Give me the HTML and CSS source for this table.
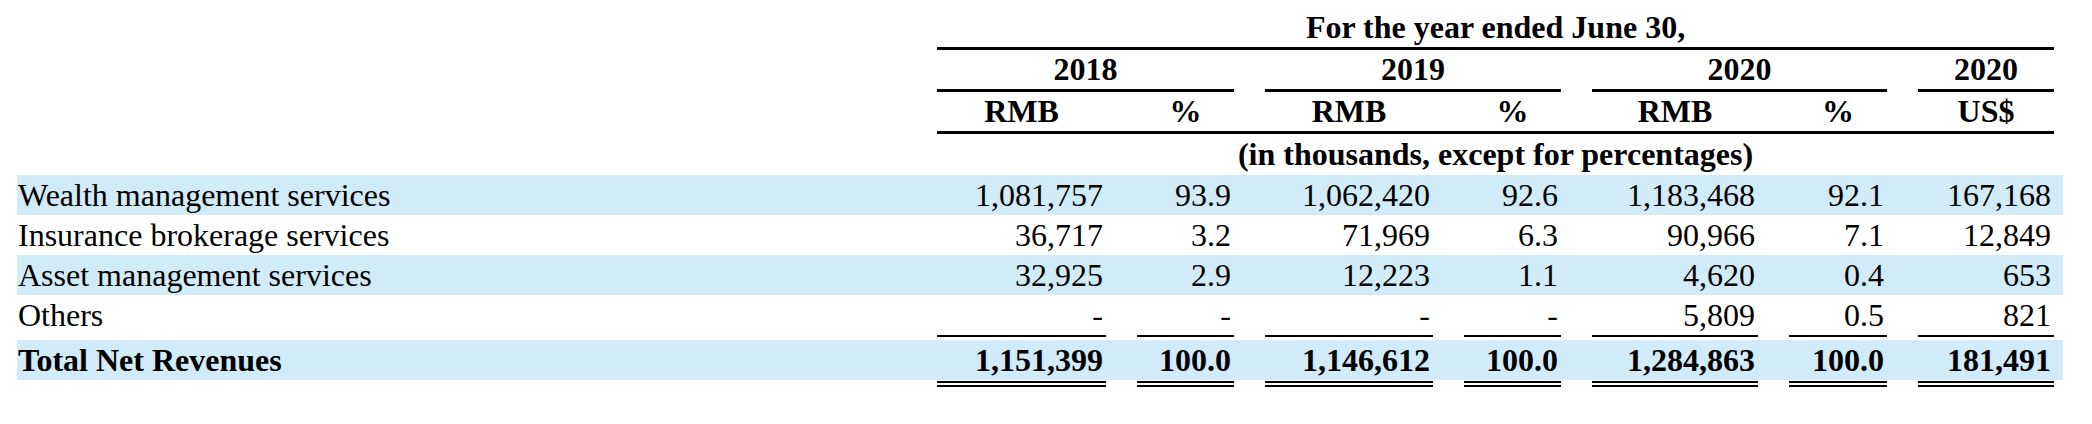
FILE: index.html
```html
<!DOCTYPE html>
<html lang="en">
<head>
<meta charset="utf-8">
<title>Net revenues by service line</title>
<link rel="stylesheet" href="styles.css">
</head>
<body>
<div class="fin-table">
  <div class="grid head-title">
    <div class="title">For the year ended June 30,</div>
  </div>
  <div class="grid head-years">
    <div class="year span-2018">2018</div>
    <div class="year span-2019">2019</div>
    <div class="year span-2020">2020</div>
    <div class="year span-usd">2020</div>
  </div>
  <div class="grid head-units">
    <div class="unit c1">RMB</div>
    <div class="unit c2">%</div>
    <div class="unit c3">RMB</div>
    <div class="unit c4">%</div>
    <div class="unit c5">RMB</div>
    <div class="unit c6">%</div>
    <div class="unit c7">US$</div>
    <div class="rule-full"></div>
  </div>
  <div class="grid head-note">
    <div class="note">(in thousands, except for percentages)</div>
  </div>

  <div class="grid data-row shaded">
    <div class="label">Wealth management services</div>
    <div class="num">1,081,757</div>
    <div class="num">93.9</div>
    <div class="num">1,062,420</div>
    <div class="num">92.6</div>
    <div class="num">1,183,468</div>
    <div class="num">92.1</div>
    <div class="num">167,168</div>
  </div>
  <div class="grid data-row">
    <div class="label">Insurance brokerage services</div>
    <div class="num">36,717</div>
    <div class="num">3.2</div>
    <div class="num">71,969</div>
    <div class="num">6.3</div>
    <div class="num">90,966</div>
    <div class="num">7.1</div>
    <div class="num">12,849</div>
  </div>
  <div class="grid data-row shaded">
    <div class="label">Asset management services</div>
    <div class="num">32,925</div>
    <div class="num">2.9</div>
    <div class="num">12,223</div>
    <div class="num">1.1</div>
    <div class="num">4,620</div>
    <div class="num">0.4</div>
    <div class="num">653</div>
  </div>
  <div class="grid data-row">
    <div class="label">Others</div>
    <div class="num">-</div>
    <div class="num">-</div>
    <div class="num">-</div>
    <div class="num">-</div>
    <div class="num">5,809</div>
    <div class="num">0.5</div>
    <div class="num">821</div>
  </div>
  <div class="grid rule-row single">
    <span class="c1"></span><span class="c2"></span><span class="c3"></span><span class="c4"></span><span class="c5"></span><span class="c6"></span><span class="c7"></span>
  </div>
  <div class="grid data-row shaded total">
    <div class="label">Total Net Revenues</div>
    <div class="num">1,151,399</div>
    <div class="num">100.0</div>
    <div class="num">1,146,612</div>
    <div class="num">100.0</div>
    <div class="num">1,284,863</div>
    <div class="num">100.0</div>
    <div class="num">181,491</div>
  </div>
  <div class="grid rule-row double">
    <span class="c1"></span><span class="c2"></span><span class="c3"></span><span class="c4"></span><span class="c5"></span><span class="c6"></span><span class="c7"></span>
  </div>
</div>
</body>
</html>
```

FILE: styles.css
```css
html, body {
  margin: 0;
  padding: 0;
  background: #ffffff;
}

body {
  font-family: "Liberation Serif", "Times New Roman", serif;
  font-size: 32px;
  color: #000000;
}

.fin-table {
  width: 2046px;
  padding-left: 17px;
}

.grid {
  display: grid;
  grid-template-columns: 889px 169px 97px 168px 97px 166px 98px 136px;
  column-gap: 31px;
  padding-right: 9px;
}

/* header */
.head-title .title {
  grid-column: 2 / 9;
  text-align: center;
  font-weight: bold;
  padding-top: 8px;
  line-height: 39px;
  border-bottom: 3px solid #000;
}

.year {
  text-align: center;
  font-weight: bold;
  line-height: 39px;
  border-bottom: 3px solid #000;
}
.span-2018 { grid-column: 2 / 4; }
.span-2019 { grid-column: 4 / 6; }
.span-2020 { grid-column: 6 / 8; }
.span-usd  { grid-column: 8 / 9; }

.unit {
  text-align: center;
  font-weight: bold;
  line-height: 39px;
}

.c1 { grid-column: 2; }
.c2 { grid-column: 3; }
.c3 { grid-column: 4; }
.c4 { grid-column: 5; }
.c5 { grid-column: 6; }
.c6 { grid-column: 7; }
.c7 { grid-column: 8; }

.rule-full {
  grid-column: 2 / 9;
  height: 3px;
  background: #000;
}

.head-note .note {
  grid-column: 2 / 9;
  text-align: center;
  font-weight: bold;
  line-height: 41px;
}

/* body rows */
.data-row {
  height: 40px;
  line-height: 40px;
}

.data-row.shaded {
  background: #d1ebf9;
}

.data-row .label {
  padding-left: 1px;
  white-space: nowrap;
}

.data-row .num {
  text-align: right;
  padding-right: 3px;
  white-space: nowrap;
}

.data-row.total {
  font-weight: bold;
}

.rule-row.single {
  margin-bottom: 3px;
}
.rule-row.single span {
  border-top: 2px solid #000;
}

.rule-row.double span {
  border-top: 6px double #000;
  margin-top: 1px;
}
```
